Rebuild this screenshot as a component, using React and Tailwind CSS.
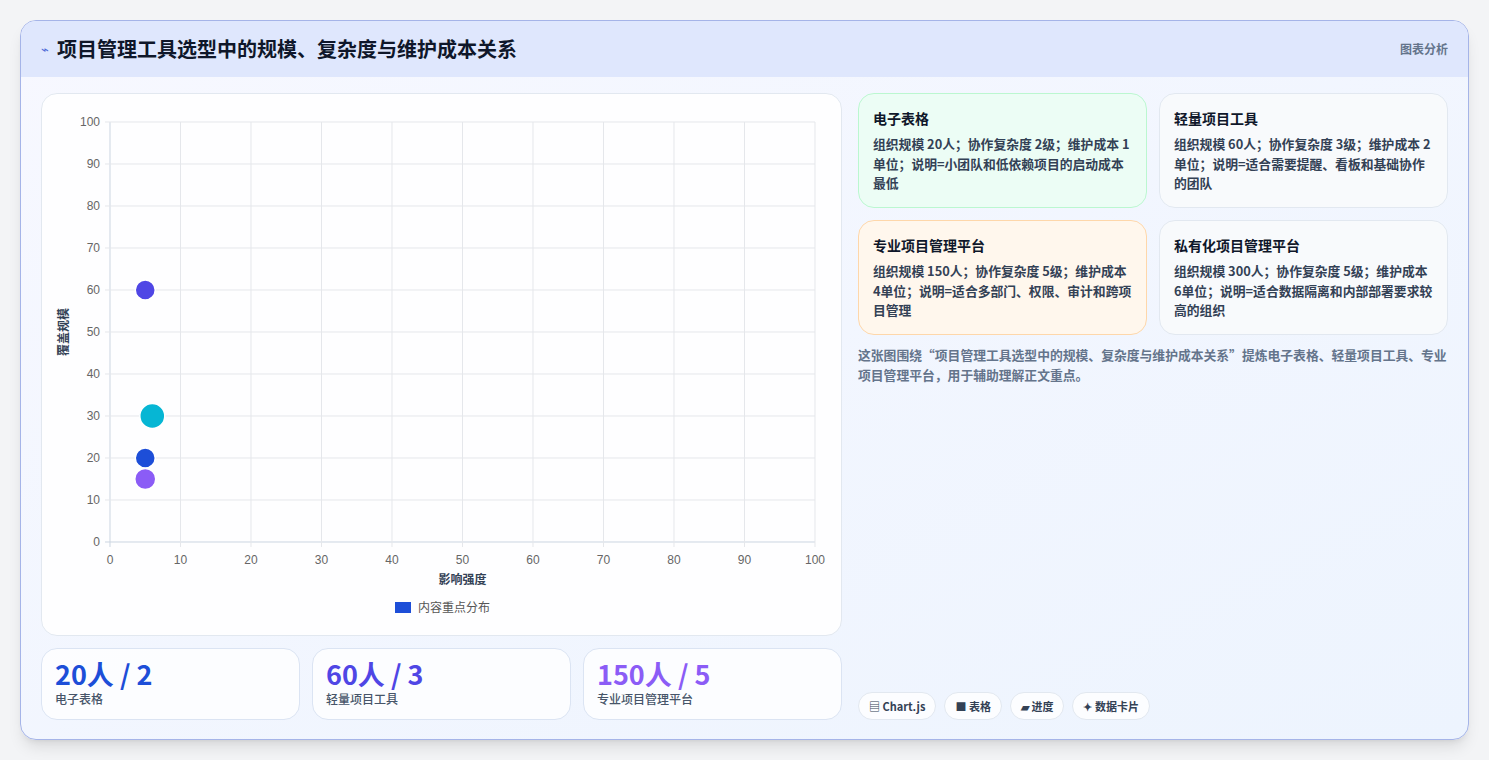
import React from 'react';

const FONT = { fontFamily: '"Noto Sans CJK SC", "Noto Sans", sans-serif' };
const AX = { fontFamily: '"Liberation Sans", "Noto Sans CJK SC", sans-serif' };

const CARDS = [
  { title: '电子表格', body: '组织规模 20人；协作复杂度 2级；维护成本 1单位；说明=小团队和低依赖项目的启动成本最低', cls: 'bg-[#ecfdf5] border-[#bbf7d0]' },
  { title: '轻量项目工具', body: '组织规模 60人；协作复杂度 3级；维护成本 2单位；说明=适合需要提醒、看板和基础协作的团队', cls: 'bg-[#f8fafc] border-[#e2e8f0]' },
  { title: '专业项目管理平台', body: '组织规模 150人；协作复杂度 5级；维护成本 4单位；说明=适合多部门、权限、审计和跨项目管理', cls: 'bg-[#fff7ed] border-[#fed7aa]' },
  { title: '私有化项目管理平台', body: '组织规模 300人；协作复杂度 5级；维护成本 6单位；说明=适合数据隔离和内部部署要求较高的组织', cls: 'bg-[#f8fafc] border-[#e2e8f0]' },
];

const STATS = [
  { v: '20人 / 2', l: '电子表格', c: 'text-[#1d4ed8]' },
  { v: '60人 / 3', l: '轻量项目工具', c: 'text-[#4f46e5]' },
  { v: '150人 / 5', l: '专业项目管理平台', c: 'text-[#8b5cf6]' },
];

const POINTS = [
  { x: 5, y: 60, r: 10, c: '#4f46e5' },
  { x: 6, y: 30, r: 12.5, c: '#06b6d4' },
  { x: 5, y: 20, r: 10, c: '#1d4ed8' },
  { x: 5, y: 15, r: 10.5, c: '#8b5cf6' },
];

function Chart() {
  const x0 = 68, x1 = 773, y0 = 448, y1 = 28;
  const sx = (v) => x0 + ((x1 - x0) * v) / 100;
  const sy = (v) => y0 - ((y0 - y1) * v) / 100;
  const ticks = [0, 10, 20, 30, 40, 50, 60, 70, 80, 90, 100];
  return (
    <svg width="801" height="541" className="block">
      {ticks.map((t) => (
        <g key={t}>
          <line x1={sx(t)} x2={sx(t)} y1={y1} y2={y0 + 5} stroke={t === 0 ? '#cbd5e1' : '#e5e7eb'} />
          <line x1={x0 - 5} x2={x1} y1={sy(t)} y2={sy(t)} stroke={t === 0 ? '#cbd5e1' : '#e5e7eb'} />
          <text x={sx(t)} y={y0 + 22} textAnchor="middle" fontSize="12" fill="#666" style={AX}>{t}</text>
          <text x={x0 - 10} y={sy(t) + 4} textAnchor="end" fontSize="12" fill="#666" style={AX}>{t}</text>
        </g>
      ))}
      {POINTS.map((p, i) => (
        <circle key={i} cx={sx(p.x)} cy={sy(p.y)} r={p.r} fill={p.c} stroke="#fff" strokeWidth="1.5" />
      ))}
      <text x={(x0 + x1) / 2} y={490} textAnchor="middle" fontSize="12" fontWeight="bold" fill="#334155" style={FONT}>影响强度</text>
      <text transform="translate(26 238) rotate(-90)" textAnchor="middle" fontSize="12" fontWeight="bold" fill="#334155" style={FONT}>覆盖规模</text>
      <rect x="353" y="508" width="16" height="11" fill="#1d4ed8" />
      <text x="376" y="518" fontSize="12" fill="#555" style={FONT}>内容重点分布</text>
    </svg>
  );
}

export default function App() {
  return (
    <div className="w-[1489px] h-[760px] bg-[#f3f4f6] pt-[20px] pl-[20px]" style={FONT}>
      <div className="w-[1449px] h-[720px] rounded-2xl border border-[#a5b4e8] overflow-hidden bg-gradient-to-br from-[#f7f8ff] to-[#edf4fe] shadow-lg flex flex-col">
        <div className="h-[56px] shrink-0 bg-[#dfe7fd] flex items-center justify-between px-5">
          <div className="flex items-center gap-2">
            <span className="text-[#4f6bd8] text-[13px]">⌁</span>
            <span className="text-[20px] font-bold text-[#0f172a]">项目管理工具选型中的规模、复杂度与维护成本关系</span>
          </div>
          <span className="text-[12px] font-bold text-[#64748b]">图表分析</span>
        </div>
        <div className="flex gap-4 px-5 pt-4 flex-1">
          <div className="w-[801px] flex flex-col gap-3">
            <div className="h-[543px] bg-white/90 border border-[#e2e8f0] rounded-2xl overflow-hidden">
              <Chart />
            </div>
            <div className="grid grid-cols-3 gap-3">
              {STATS.map((s) => (
                <div key={s.l} className="h-[72px] rounded-2xl border border-[#dbe4f3] bg-white/80 px-[13px] pt-[9px]">
                  <div className={`text-[27px] leading-[32px] font-bold ${s.c}`}>{s.v}</div>
                  <div className="text-[12px] font-medium text-[#475569]">{s.l}</div>
                </div>
              ))}
            </div>
          </div>
          <div className="w-[591px] flex flex-col pb-[19px]">
            <div className="grid grid-cols-2 gap-3">
              {CARDS.map((c) => (
                <div key={c.title} className={`h-[115px] rounded-2xl border px-[14px] pt-[14px] ${c.cls}`}>
                  <div className="text-[14px] font-bold text-[#0f172a] leading-5">{c.title}</div>
                  <div className="text-[12.8px] font-bold text-[#334155] leading-[19.5px] mt-[6px]">{c.body}</div>
                </div>
              ))}
            </div>
            <p className="text-[12.8px] font-bold text-[#64748b] leading-[20px] mt-[10px]">
              这张图围绕“项目管理工具选型中的规模、复杂度与维护成本关系”提炼电子表格、轻量项目工具、专业项目管理平台，用于辅助理解正文重点。
            </p>
            <div className="mt-auto flex gap-2">
              {['▤ Chart.js', '■ 表格', '▰ 进度', '✦ 数据卡片'].map((t) => (
                <span key={t} className="h-[28px] px-[10px] rounded-full bg-white/80 border border-[#e2e8f0] text-[11px] font-bold text-[#334155] flex items-center">{t}</span>
              ))}
            </div>
          </div>
        </div>
      </div>
    </div>
  );
}
